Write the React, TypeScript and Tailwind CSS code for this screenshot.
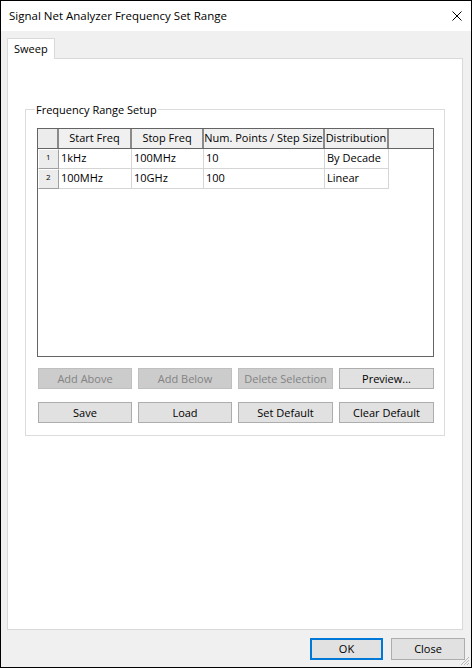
import React from 'react';

const COLUMNS = [
    { title: 'Start Freq', width: 'w-[73px]' },
    { title: 'Stop Freq', width: 'w-[72px]' },
    { title: 'Num. Points / Step Size', width: 'w-[121px]' },
    { title: 'Distribution', width: 'w-[64px]' },
];

const ROWS = [
    ['1kHz', '100MHz', '10', 'By Decade'],
    ['100MHz', '10GHz', '100', 'Linear'],
];

const Button: React.FC<{ label: string; disabled?: boolean; width?: string; height?: string; focused?: boolean }> = ({
    label,
    disabled,
    width = 'w-[94px]',
    height = 'h-[21px]',
    focused,
}) => {
    if (disabled) {
        return (
            <div className={`${width} ${height} flex items-center justify-center pt-[1px] border border-[#bfbfbf] bg-[#cccccc] text-[#838383]`}>
                {label}
            </div>
        );
    }
    return (
        <div
            className={`${width} ${height} flex items-center justify-center pt-[1px] bg-[#e1e1e1] ${focused ? 'border-2 border-[#0078d7]' : 'border border-[#adadad]'
                }`}
        >
            {label}
        </div>
    );
};

const RangeGrid: React.FC = () => (
    <div className="w-[397px] h-[229px] border border-[#646464] bg-white flex flex-col">
        {/* header row */}
        <div className="flex h-[20px] border-b border-[#646464] bg-[#f0f0f0]">
            <div className="w-[21px] border-r-2 border-[#8a8a8a] bg-[#ececec]" />
            {COLUMNS.map((col) => (
                <div
                    key={col.title}
                    className={`${col.width} flex items-center justify-center border-r-2 border-[#8a8a8a] whitespace-nowrap`}
                >
                    {col.title}
                </div>
            ))}
            <div className="flex-1" />
        </div>
        {ROWS.map((row, i) => (
            <div key={i} className="flex h-[20px]">
                <div className="w-[21px] border-r border-b border-[#a0a0a0] bg-[#ececec] border-t border-t-white border-l border-l-white text-[8px] leading-none pl-[7px] pt-[3px]">
                    {i + 1}
                </div>
                {row.map((cell, j) => (
                    <div
                        key={j}
                        className={`${COLUMNS[j].width} flex items-center pl-[2px] border-r border-b border-[#d5d5d5] whitespace-nowrap`}
                    >
                        {cell}
                    </div>
                ))}
            </div>
        ))}
    </div>
);

export default function App() {
    return (
        <div className="relative w-[472px] h-[668px] border border-black bg-[#f0f0f0] flex flex-col text-[11px] text-black font-['Segoe_UI','Open_Sans',sans-serif]">
            {/* title bar */}
            <div className="h-[30px] bg-white flex items-center pl-[8px] pr-[9px] text-[11.5px]">
                <span className="flex-1">Signal Net Analyzer Frequency Set Range</span>
                <svg width="10" height="10" viewBox="0 0 10 10">
                    <path d="M0.5 0.5 L9.5 9.5 M9.5 0.5 L0.5 9.5" stroke="#000" strokeWidth="1" />
                </svg>
            </div>

            <div className="flex flex-col pl-[6px] pt-[7px]">
                {/* tab strip */}
                <div className="flex">
                    <div className="relative z-10 -mb-px w-[48px] h-[21px] border-t border-l border-r border-[#d9d9d9] bg-white flex items-center pl-[6px]">
                        Sweep
                    </div>
                </div>

                {/* tab page */}
                <div className="w-[456px] h-[572px] border border-[#d9d9d9] bg-white pl-[17px] pt-[50px]">
                    <div className="relative w-[420px] border border-[#dcdcdc] pl-[11px] pt-[18px] pb-[12px]">
                        <span className="absolute left-[9px] -top-[8px] px-[1px] bg-white leading-[15px]">
                            Frequency Range Setup
                        </span>
                        <RangeGrid />
                        <div className="flex gap-[6px] pl-[1px] mt-[11px]">
                            <Button label="Add Above" disabled />
                            <Button label="Add Below" disabled />
                            <Button label="Delete Selection" disabled width="w-[95px]" />
                            <Button label="Preview..." width="w-[95px]" />
                        </div>
                        <div className="flex gap-[6px] pl-[1px] mt-[13px]">
                            <Button label="Save" />
                            <Button label="Load" />
                            <Button label="Set Default" width="w-[95px]" />
                            <Button label="Clear Default" width="w-[95px]" />
                        </div>
                    </div>
                </div>
            </div>

            {/* dialog buttons */}
            <div className="flex justify-end gap-[8px] pr-[6px] mt-[8px]">
                <Button label="OK" width="w-[73px]" height="h-[22px]" focused />
                <Button label="Close" width="w-[74px]" height="h-[22px]" />
            </div>

            {/* size grip */}
            <svg className="absolute right-[1px] bottom-[1px]" width="11" height="11" viewBox="0 0 11 11">
                <path d="M10 2 L2 10 M10 5 L5 10 M10 8 L8 10" stroke="#b8b8b8" strokeWidth="1" />
            </svg>
        </div>
    );
}
